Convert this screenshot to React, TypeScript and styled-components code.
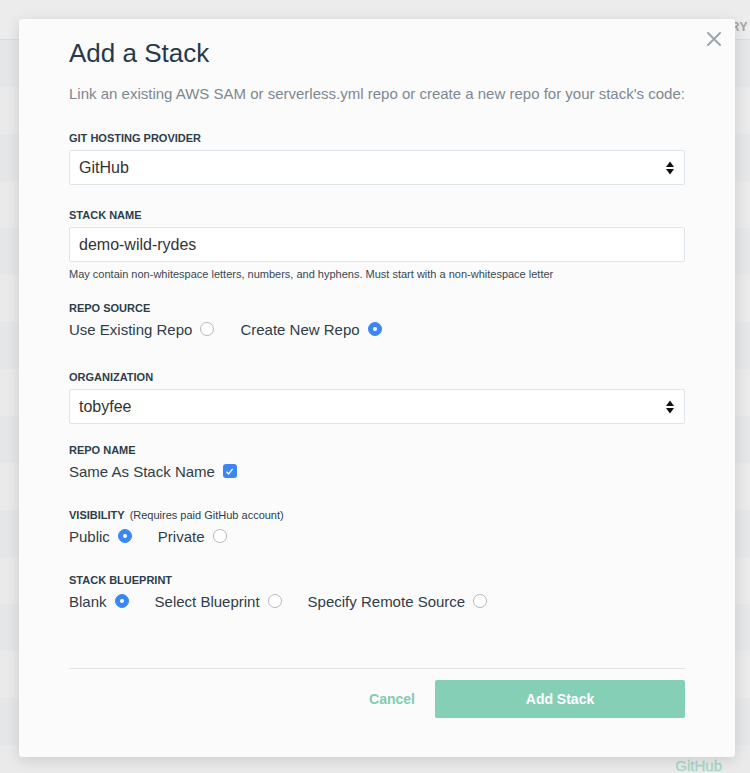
import styled, { createGlobalStyle } from "styled-components";

const GlobalStyle = createGlobalStyle`
  html, body {
    margin: 0;
    padding: 0;
  }
  body {
    font-family: "Liberation Sans", Helvetica, Arial, sans-serif;
    background: #eaeaea;
  }
  * {
    box-sizing: border-box;
  }
`;

const Page = styled.div`
  position: relative;
  width: 750px;
  height: 773px;
  overflow: hidden;
  background: #eaeaea;
`;

const TopBar = styled.div`
  height: 40px;
  border-bottom: 1px solid #dcdcdc;
  background: #ececec;
  display: flex;
  justify-content: flex-end;
  align-items: flex-start;
  padding: 20px 2px 0 0;
  font-size: 12px;
  line-height: 14px;
  font-weight: 700;
  letter-spacing: 0.5px;
  color: #a5a5a5;
`;

const BgRow = styled.div<{ $alt: boolean }>`
  height: 47px;
  background: ${({ $alt }) => ($alt ? "#eaeaea" : "#e5e6e8")};
  display: flex;
  justify-content: flex-end;
  align-items: flex-start;
  padding: 12px 28px 0 0;
  font-size: 15px;
  font-weight: 400;
  -webkit-text-stroke: 0.3px #a4d8c5;
  color: #a4d8c5;
`;

const Modal = styled.div`
  position: absolute;
  left: 19px;
  top: 19px;
  width: 716px;
  height: 738px;
  background: #fbfbfb;
  border-radius: 3px;
  box-shadow: 0 3px 14px rgba(0, 0, 0, 0.13);
  padding: 20px 50px 39px;
  display: flex;
  flex-direction: column;
`;

const CloseButton = styled.button`
  position: absolute;
  top: 13px;
  right: 14px;
  width: 14px;
  height: 14px;
  padding: 0;
  border: none;
  background: none;
  cursor: pointer;
  display: flex;
`;

const Title = styled.h2`
  margin: 0;
  font-size: 26px;
  line-height: 28px;
  font-weight: 400;
  color: #26394a;
`;

const Description = styled.p`
  margin: 17px 0 0;
  font-size: 15px;
  line-height: 20px;
  color: #7d8891;
`;

const Field = styled.div<{ $top: number }>`
  margin-top: ${({ $top }) => $top}px;
  display: flex;
  flex-direction: column;
`;

const Label = styled.div`
  font-size: 11px;
  line-height: 14px;
  font-weight: 700;
  text-transform: uppercase;
  color: #2c3e4c;
  display: flex;
  gap: 5px;
`;

const LabelNote = styled.span`
  font-weight: 400;
  text-transform: none;
`;

const Box = styled.div`
  margin-top: 5px;
  height: 35px;
  background: #fff;
  border: 1px solid #dde4ea;
  border-radius: 2px;
  display: flex;
  align-items: center;
  justify-content: space-between;
  padding: 0 10px 0 9px;
  font-size: 16px;
  color: #333;
`;

const Help = styled.div`
  margin-top: 5px;
  font-size: 11px;
  line-height: 14px;
  color: #3a4650;
`;

const OptionRow = styled.div`
  margin-top: 4px;
  height: 20px;
  display: flex;
  align-items: center;
  gap: 26px;
`;

const Option = styled.label`
  display: flex;
  align-items: center;
  gap: 8px;
  font-size: 15px;
  color: #2f3d48;
`;

const Radio = styled.span<{ $on: boolean }>`
  width: 14px;
  height: 14px;
  border-radius: 50%;
  display: flex;
  align-items: center;
  justify-content: center;
  background: ${({ $on }) => ($on ? "#3a87f3" : "#fff")};
  border: 1px solid ${({ $on }) => ($on ? "#3a87f3" : "#b8b8b8")};

  &::after {
    content: "";
    display: ${({ $on }) => ($on ? "block" : "none")};
    width: 4px;
    height: 4px;
    border-radius: 50%;
    background: #fff;
  }
`;

const Check = styled.span`
  width: 14px;
  height: 14px;
  border-radius: 3px;
  background: #3a87f3;
  display: flex;
  align-items: center;
  justify-content: center;
`;

const Footer = styled.div`
  margin-top: auto;
  border-top: 1px solid #e3e3e3;
  padding-top: 11px;
  display: flex;
  align-items: center;
  justify-content: flex-end;
`;

const CancelButton = styled.button`
  border: none;
  background: none;
  padding: 0;
  margin-right: 20px;
  font-family: inherit;
  font-size: 14px;
  font-weight: 700;
  color: #7fcdb1;
  cursor: pointer;
`;

const PrimaryButton = styled.button`
  width: 250px;
  height: 38px;
  border: none;
  border-radius: 2px;
  background: #84cfb5;
  font-family: inherit;
  font-size: 14px;
  font-weight: 700;
  color: #fff;
  cursor: pointer;
`;

const SelectArrows = () => (
  <svg width="8" height="14" viewBox="0 0 8 14">
    <polygon points="0,6 4,0.5 8,6" fill="#111" />
    <polygon points="0,8 8,8 4,13.5" fill="#111" />
  </svg>
);

const CloseIcon = () => (
  <svg width="14" height="14" viewBox="0 0 14 14">
    <path d="M1 1 L13 13 M13 1 L1 13" stroke="#9aa7b0" strokeWidth="2" strokeLinecap="round" />
  </svg>
);

const CheckMark = () => (
  <svg width="9" height="9" viewBox="0 0 9 9">
    <path d="M1.5 4.8 L3.6 6.9 L7.6 1.8" stroke="#fff" strokeWidth="1.3" fill="none" />
  </svg>
);

const RadioOption = ({ label, on }: { label: string; on?: boolean }) => (
  <Option>
    {label}
    <Radio $on={!!on} />
  </Option>
);

export default function App() {
  const rows = Array.from({ length: 16 }, (_, i) => i);
  return (
    <Page>
      <GlobalStyle />
      <TopBar>HISTORY</TopBar>
      {rows.map((i) => (
        <BgRow key={i} $alt={i % 2 === 1}>
          {i === 15 ? "GitHub" : null}
        </BgRow>
      ))}

      <Modal>
        <CloseButton aria-label="Close">
          <CloseIcon />
        </CloseButton>
        <Title>Add a Stack</Title>
        <Description>
          Link an existing AWS SAM or serverless.yml repo or create a new repo for your stack's code:
        </Description>

        <Field $top={27}>
          <Label>Git Hosting Provider</Label>
          <Box>
            GitHub
            <SelectArrows />
          </Box>
        </Field>

        <Field $top={23}>
          <Label>Stack Name</Label>
          <Box>demo-wild-rydes</Box>
          <Help>
            May contain non-whitespace letters, numbers, and hyphens. Must start with a non-whitespace letter
          </Help>
        </Field>

        <Field $top={20}>
          <Label>Repo Source</Label>
          <OptionRow>
            <RadioOption label="Use Existing Repo" />
            <RadioOption label="Create New Repo" on />
          </OptionRow>
        </Field>

        <Field $top={31}>
          <Label>Organization</Label>
          <Box>
            tobyfee
            <SelectArrows />
          </Box>
        </Field>

        <Field $top={19}>
          <Label>Repo Name</Label>
          <OptionRow>
            <Option>
              Same As Stack Name
              <Check>
                <CheckMark />
              </Check>
            </Option>
          </OptionRow>
        </Field>

        <Field $top={27}>
          <Label>
            Visibility <LabelNote>(Requires paid GitHub account)</LabelNote>
          </Label>
          <OptionRow>
            <RadioOption label="Public" on />
            <RadioOption label="Private" />
          </OptionRow>
        </Field>

        <Field $top={27}>
          <Label>Stack Blueprint</Label>
          <OptionRow>
            <RadioOption label="Blank" on />
            <RadioOption label="Select Blueprint" />
            <RadioOption label="Specify Remote Source" />
          </OptionRow>
        </Field>

        <Footer>
          <CancelButton>Cancel</CancelButton>
          <PrimaryButton>Add Stack</PrimaryButton>
        </Footer>
      </Modal>
    </Page>
  );
}
